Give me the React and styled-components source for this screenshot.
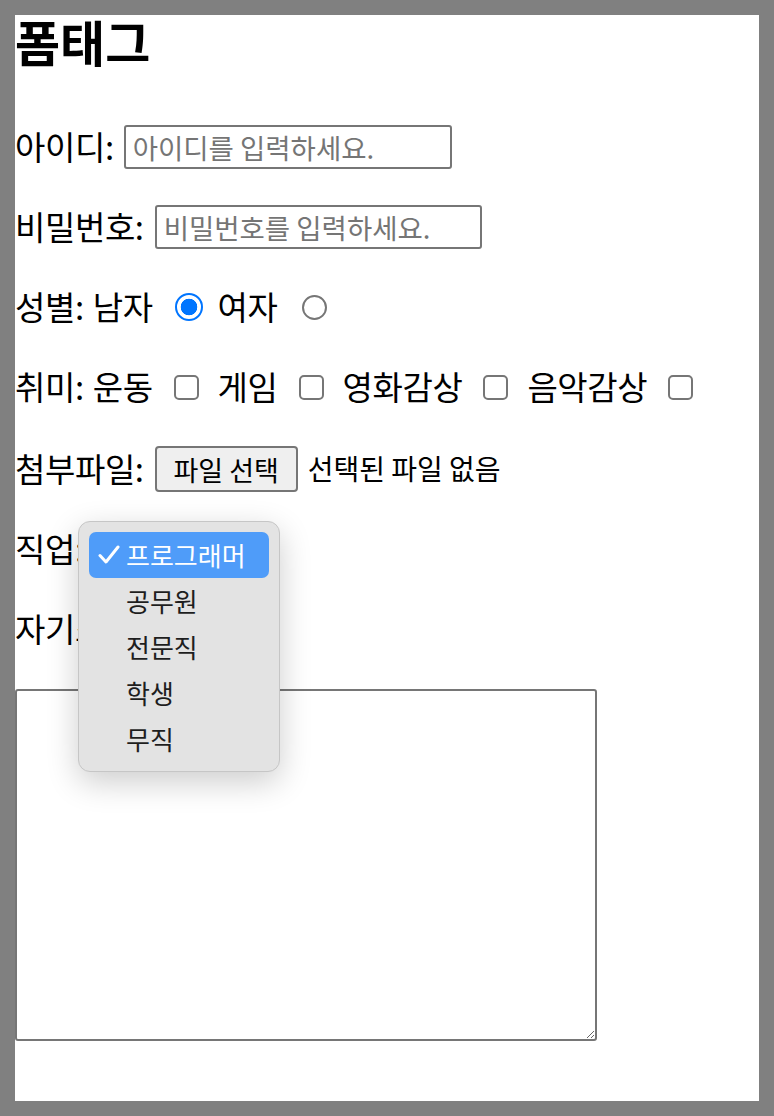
import React from 'react'
import styled, { createGlobalStyle } from 'styled-components'

const GlobalStyle = createGlobalStyle`
  html, body {
    margin: 0;
    padding: 0;
    background: #808080;
  }
  body {
    font-family: "Noto Sans CJK KR", "Noto Sans", sans-serif;
    color: #000;
  }
`

const Page = styled.div`
  box-sizing: border-box;
  height: 1116px;
  padding: 15px;
`

const Sheet = styled.form`
  background: #fff;
  height: 1086px;
`

const Title = styled.h1`
  margin: 0 0 41px;
  font-size: 49px;
  font-weight: 700;
  line-height: 51px;
`

const Row = styled.div`
  position: relative;
  display: flex;
  align-items: center;
  height: 80px;
  margin-top: ${p => p.$nudge || 0}px;
  font-size: 33px;
  line-height: 1.2;
  letter-spacing: -0.4px;
  word-spacing: 2px;
`

const Label = styled.label`
  white-space: pre;
  margin-right: ${p => p.$gap || 0}px;
`

const TextInput = styled.input`
  box-sizing: border-box;
  width: ${p => p.$w}px;
  height: 44px;
  margin: 0;
  padding: 0 7px;
  border: 2px solid #767676;
  border-radius: 3px;
  font-family: inherit;
  font-size: 27.5px;
  letter-spacing: 0;
  word-spacing: 0;
  &::placeholder {
    color: #757575;
  }
`

const Radio = styled.input.attrs({ type: 'radio' })`
  appearance: none;
  box-sizing: border-box;
  width: 25px;
  height: 25px;
  margin: 0 19px 0 24px;
  border: 2px solid #767676;
  border-radius: 50%;
  background: #fff;
  &:checked {
    width: 28px;
    height: 28px;
    margin: 0 15px 0 22px;
    border: 2.5px solid #0075ff;
    background: radial-gradient(circle, #0075ff 0 8px, #fff 8.6px);
  }
`

const Check = styled.input.attrs({ type: 'checkbox' })`
  appearance: none;
  box-sizing: border-box;
  width: 25px;
  height: 25px;
  margin: 0 19px 0 21px;
  border: 2px solid #767676;
  border-radius: 5px;
  background: #fff;
`

const FileButton = styled.button`
  box-sizing: border-box;
  width: 143px;
  height: 46px;
  margin: 0 10px 0 0;
  padding: 0;
  border: 2px solid #767676;
  border-radius: 4px;
  background: #efefef;
  color: #000;
  font-family: inherit;
  font-size: 27px;
  letter-spacing: 0;
  word-spacing: 0;
`

const FileNote = styled.span`
  font-size: 28px;
  letter-spacing: 0;
  word-spacing: 0;
`

const Select = styled.select`
  height: 40px;
  font-family: inherit;
  font-size: 24px;
`

const Intro = styled.textarea`
  display: block;
  box-sizing: border-box;
  width: 582px;
  height: 352px;
  margin: 20px 0 0;
  border: 2px solid #767676;
  border-radius: 3px;
  font-family: inherit;
  font-size: 24px;
`

const Menu = styled.ul`
  position: absolute;
  top: 12px;
  left: 63px;
  z-index: 2;
  box-sizing: border-box;
  width: 202px;
  height: 251px;
  margin: 0;
  padding: 10px;
  list-style: none;
  background: #e3e3e3;
  border: 1px solid #c6c6c6;
  border-radius: 12px;
  box-shadow: 0 10px 32px rgba(0, 0, 0, 0.2);
  font-size: 26px;
  letter-spacing: 0;
  word-spacing: 0;
  color: #1e1e1e;
`

const MenuItem = styled.li`
  position: relative;
  display: flex;
  align-items: center;
  height: 46px;
  padding-left: 37px;
  border-radius: 7px;
  background: ${p => (p.$active ? '#4f9cf9' : 'transparent')};
  color: ${p => (p.$active ? '#fff' : 'inherit')};
`

const Tick = styled.svg`
  position: absolute;
  left: 9px;
  top: 13px;
`

const jobs = ['프로그래머', '공무원', '전문직', '학생', '무직']

export default function App () {
  return (
    <Page>
      <GlobalStyle />
      <Sheet onSubmit={e => e.preventDefault()}>
        <Title>폼태그</Title>

        <Row>
          <Label $gap={10}>아이디:</Label>
          <TextInput $w={328} type='text' placeholder='아이디를 입력하세요.' />
        </Row>

        <Row>
          <Label $gap={11}>비밀번호:</Label>
          <TextInput $w={327} type='password' placeholder='비밀번호를 입력하세요.' />
        </Row>

        <Row>
          <Label>성별: 남자</Label>
          <Radio name='gender' defaultChecked />
          <Label>여자</Label>
          <Radio name='gender' />
        </Row>

        <Row>
          <Label>취미: 운동</Label>
          <Check />
          <Label>게임</Label>
          <Check />
          <Label>영화감상</Label>
          <Check />
          <Label>음악감상</Label>
          <Check />
        </Row>

        <Row $nudge={2}>
          <Label $gap={11}>첨부파일:</Label>
          <FileButton type='button'>파일 선택</FileButton>
          <FileNote>선택된 파일 없음</FileNote>
        </Row>

        <Row>
          <Label $gap={8}>직업:</Label>
          <Select defaultValue={jobs[0]}>
            {jobs.map(job => <option key={job}>{job}</option>)}
          </Select>
          <Menu>
            {jobs.map((job, i) => (
              <MenuItem key={job} $active={i === 0}>
                {i === 0 && (
                  <Tick width='22' height='20' viewBox='0 0 22 20'>
                    <path d='M2 10.5 L8 17 L20 2' fill='none' stroke='#fff' strokeWidth='3' strokeLinecap='round' strokeLinejoin='round' />
                  </Tick>
                )}
                {job}
              </MenuItem>
            ))}
          </Menu>
        </Row>

        <Row>
          <Label>자기소개:</Label>
        </Row>

        <Intro />
      </Sheet>
    </Page>
  )
}
